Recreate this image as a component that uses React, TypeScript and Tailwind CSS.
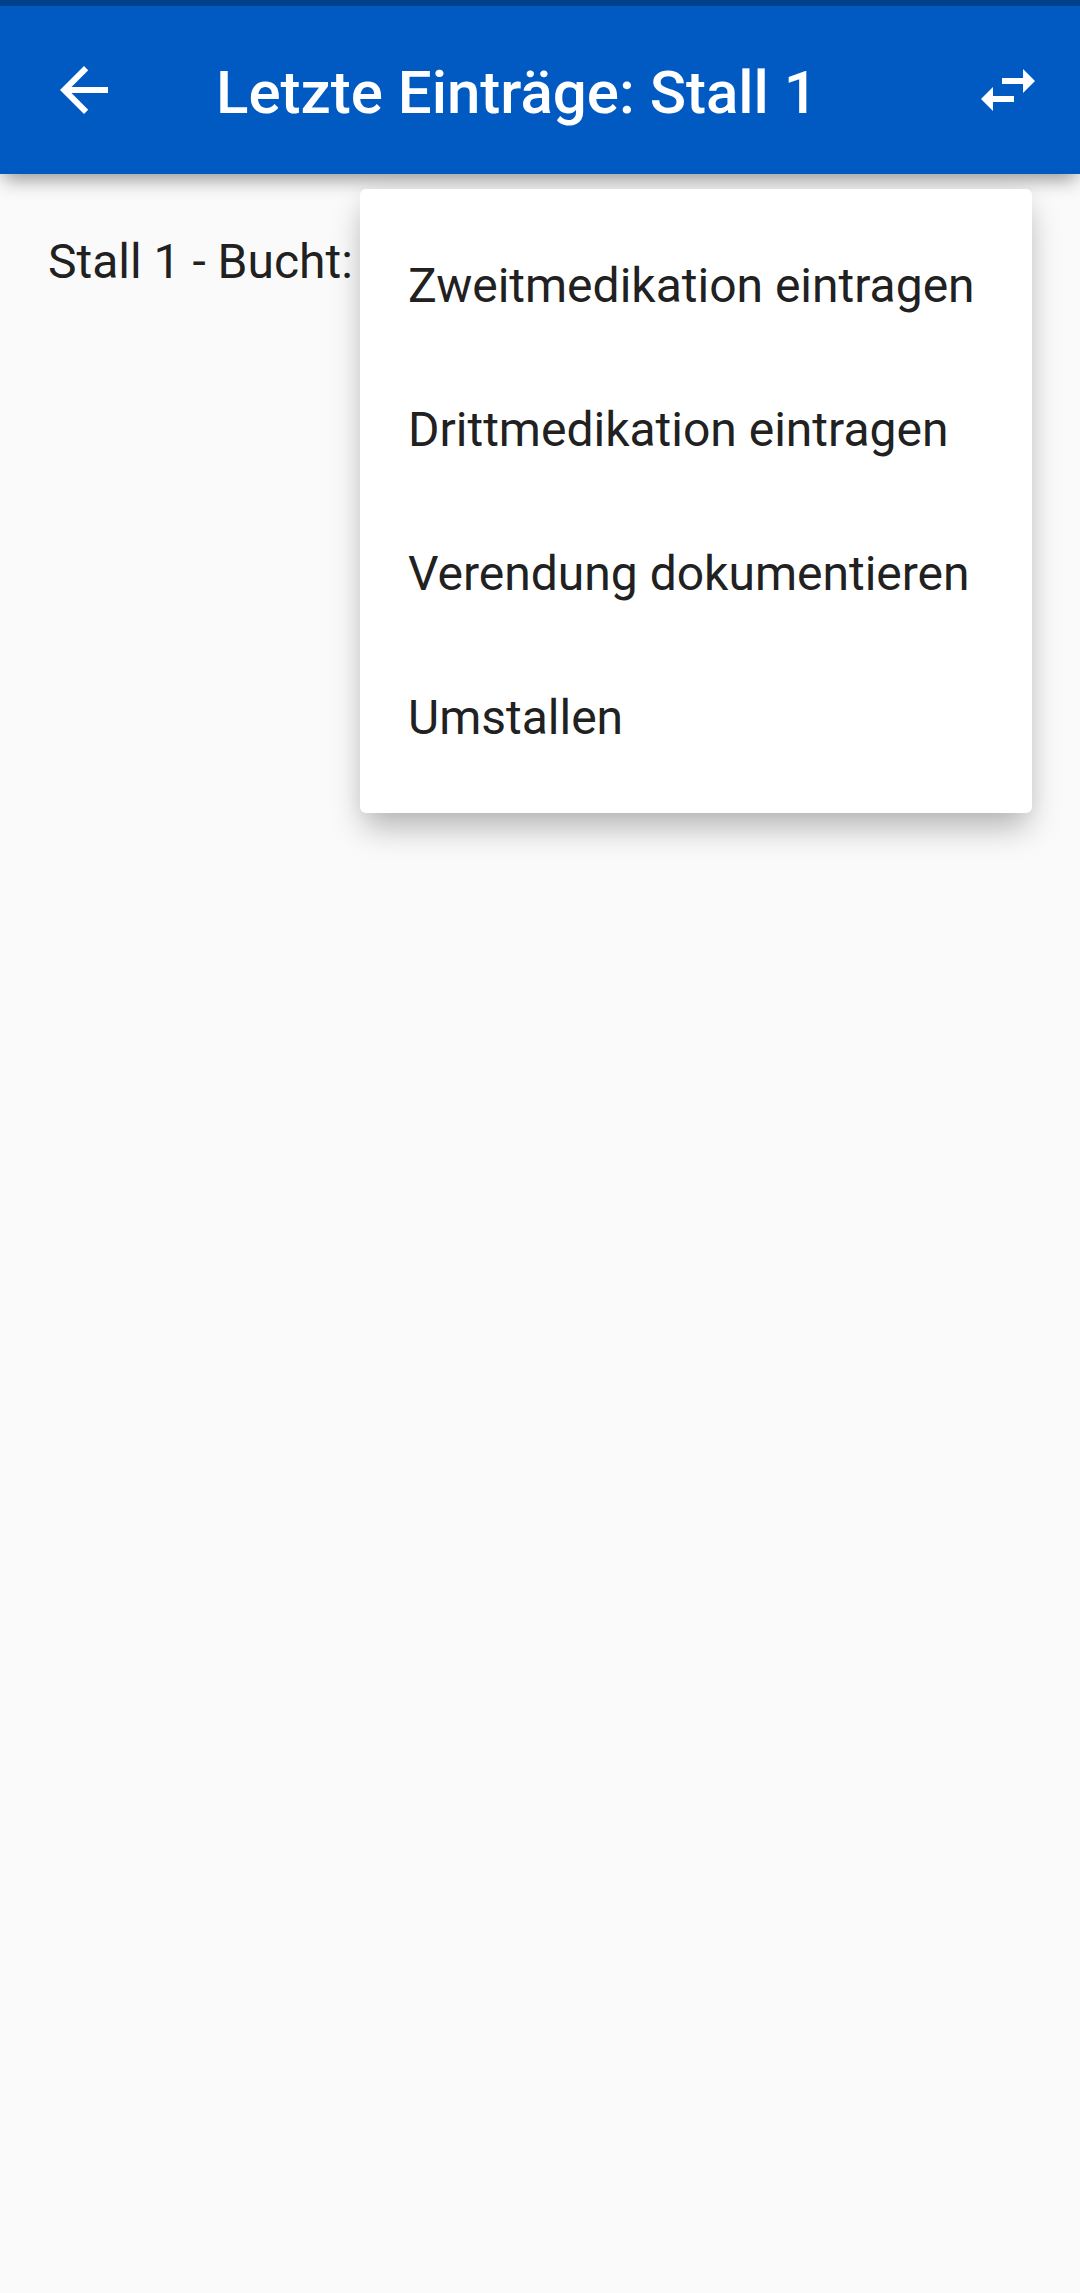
import React from "react";

const items = [
  "Zweitmedikation eintragen",
  "Drittmedikation eintragen",
  "Verendung dokumentieren",
  "Umstallen",
];

export default function App() {
  return (
    <div className="min-h-screen bg-[#fafafa] font-[Roboto,sans-serif] text-[#212121]">
      <header className="relative flex h-[174px] items-center border-t-6 border-[#00408a] bg-[#005ac1] px-9 text-white shadow-[0_9px_18px_-4px_rgba(0,0,0,0.42)]">
        <button aria-label="Zurück" className="flex size-24 items-center justify-center">
          <svg viewBox="0 0 24 24" className="size-[72px]" fill="currentColor">
            <path d="M20 11H7.83l5.59-5.59L12 4l-8 8 8 8 1.41-1.41L7.83 13H20v-2z" />
          </svg>
        </button>
        <h1 className="ml-[84px] grow pt-1.5 text-[60px] font-medium">Letzte Einträge: Stall 1</h1>
        <button aria-label="Aktionen" aria-haspopup="menu" aria-expanded="true" className="flex size-[72px] items-center justify-center">
          <svg viewBox="0 0 24 24" className="size-[72px]" fill="currentColor">
            <path d="M6.99 11L3 15l3.99 4v-3H14v-2H6.99v-3zM21 9l-3.99-4v3H10v2h7.01v3L21 9z" />
          </svg>
        </button>
        <ul role="menu" className="absolute top-[183px] right-12 w-[672px] rounded-md bg-white py-6 text-[48px] text-[#212121] shadow-[0_18px_32px_-4px_rgba(0,0,0,0.28),0_0_20px_rgba(0,0,0,0.04)]">
          {items.map((item) => (
            <li key={item} role="none">
              <button role="menuitem" className="flex h-36 w-full items-center px-12 pt-0.5 text-left whitespace-nowrap">{item}</button>
            </li>
          ))}
        </ul>
      </header>
      <main className="px-12 py-[52px]">
        <p className="text-[48px] leading-[72px]">Stall 1 - Bucht:</p>
      </main>
    </div>
  );
}
